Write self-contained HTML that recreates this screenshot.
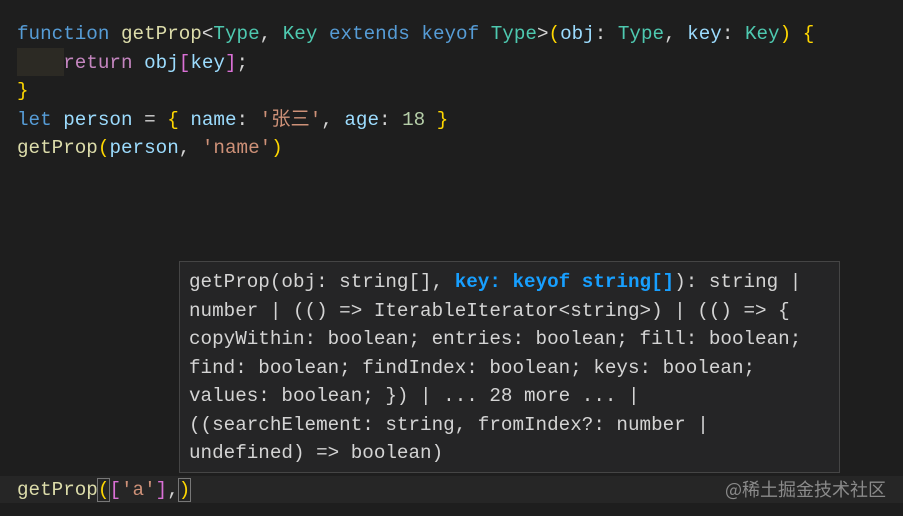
<!DOCTYPE html>
<html><head><meta charset="utf-8"><style>
body{margin:0;width:903px;height:516px;background:#1e1e1e;overflow:hidden;position:relative;font-family:"Liberation Mono","Noto Sans CJK SC",monospace;font-size:19.25px;color:#d4d4d4}
.l{position:absolute;left:17px;white-space:pre;line-height:28.5px;height:28.5px}
.k{color:#569cd6}.f{color:#dcdcaa}.t{color:#4ec9b0}.v{color:#9cdcfe}.s{color:#ce9178}.n{color:#b5cea8}.y{color:#ffd700}.p{color:#da70d6}.r{color:#c586c0}.b{color:#179fff}
#tip{position:absolute;left:179px;top:261px;width:661px;height:212px;background:#252526;border:1px solid #454545;box-sizing:border-box}
#tip .l{left:9px;color:#d4d4d4}
#cur{position:absolute;left:0;top:476px;width:903px;height:27px;background:#262626}
.wm{position:absolute;left:725px;top:476px;font-family:"Noto Sans CJK SC",sans-serif;font-size:18px;color:#8a8a8a;line-height:26px}
</style></head><body>
<div style="position:absolute;left:17px;top:48px;width:47px;height:28px;background:#2c2a24"></div>
<div class="l" style="top:20px"><span class="k">function</span> <span class="f">getProp</span>&lt;<span class="t">Type</span>, <span class="t">Key</span> <span class="k">extends</span> <span class="k">keyof</span> <span class="t">Type</span>&gt;<span class="y">(</span><span class="v">obj</span>: <span class="t">Type</span>, <span class="v">key</span>: <span class="t">Key</span><span class="y">)</span> <span class="y">{</span></div>
<div class="l" style="top:48.5px">    <span class="r">return</span> <span class="v">obj</span><span class="p">[</span><span class="v">key</span><span class="p">]</span>;</div>
<div class="l" style="top:77px"><span class="y">}</span></div>
<div class="l" style="top:105.5px"><span class="k">let</span> <span class="v">person</span> = <span class="y">{</span> <span class="v">name</span>: <span class="s">'张三'</span>, <span class="v">age</span>: <span class="n">18</span> <span class="y">}</span></div>
<div class="l" style="top:134px"><span class="f">getProp</span><span class="y">(</span><span class="v">person</span>, <span class="s">'name'</span><span class="y">)</span></div>
<div id="cur"></div>
<div class="l" style="top:475.5px"><span class="f">getProp</span><span class="y" style="outline:1px solid #777">(</span><span class="p">[</span><span class="s">'a'</span><span class="p">]</span>,<span class="y" style="outline:1px solid #777">)</span></div>
<div class="wm">@稀土掘金技术社区</div>
<div id="tip">
<div class="l" style="top:6px">getProp(obj: string[], <b class="b">key: keyof string[]</b>): string |</div>
<div class="l" style="top:34.5px">number | (() =&gt; IterableIterator&lt;string&gt;) | (() =&gt; {</div>
<div class="l" style="top:63px">copyWithin: boolean; entries: boolean; fill: boolean;</div>
<div class="l" style="top:91.5px">find: boolean; findIndex: boolean; keys: boolean;</div>
<div class="l" style="top:120px">values: boolean; }) | ... 28 more ... |</div>
<div class="l" style="top:148.5px">((searchElement: string, fromIndex?: number |</div>
<div class="l" style="top:177px">undefined) =&gt; boolean)</div>
</div>
</body></html>
